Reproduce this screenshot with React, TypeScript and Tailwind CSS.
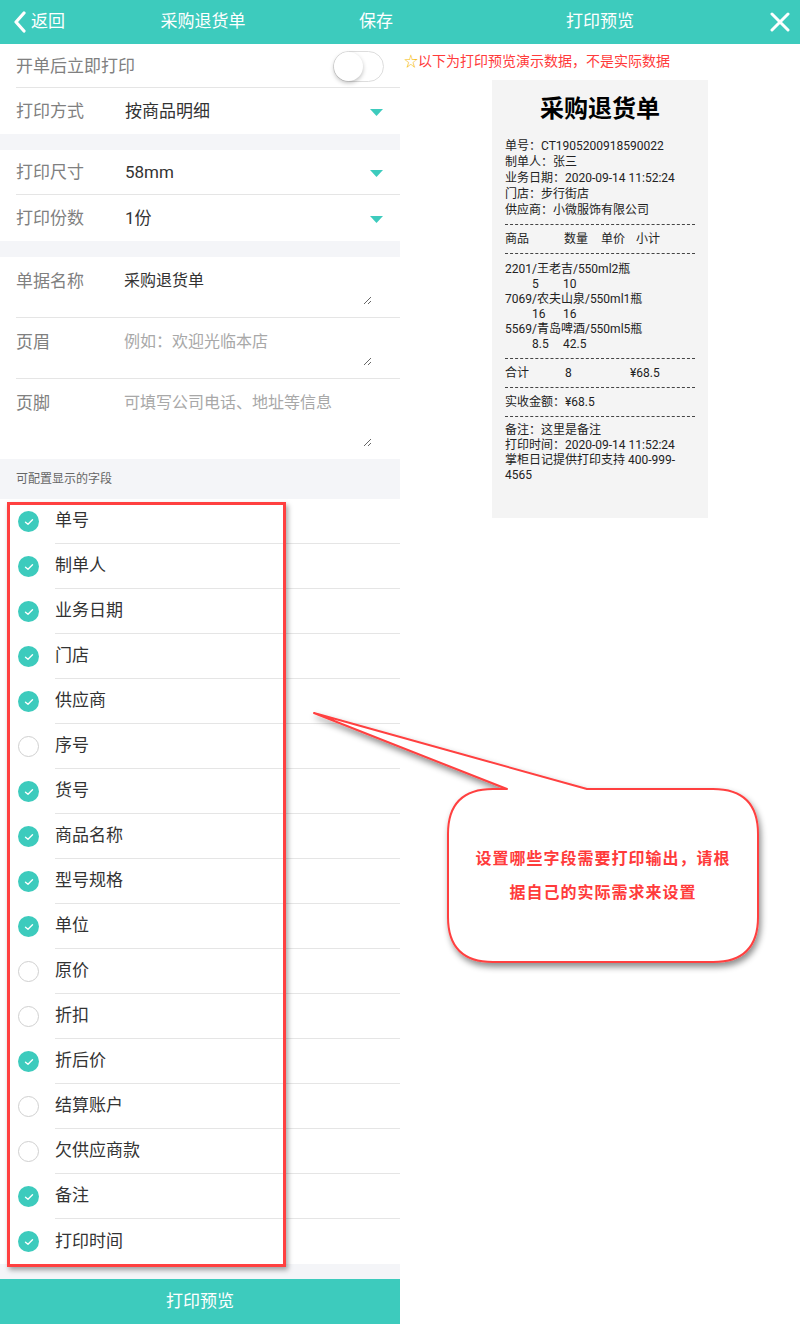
import React from "react";

const TEAL = "#3dcbbd";

const FIELDS = [
    { label: "单号", on: true },
    { label: "制单人", on: true },
    { label: "业务日期", on: true },
    { label: "门店", on: true },
    { label: "供应商", on: true },
    { label: "序号", on: false },
    { label: "货号", on: true },
    { label: "商品名称", on: true },
    { label: "型号规格", on: true },
    { label: "单位", on: true },
    { label: "原价", on: false },
    { label: "折扣", on: false },
    { label: "折后价", on: true },
    { label: "结算账户", on: false },
    { label: "欠供应商款", on: false },
    { label: "备注", on: true },
    { label: "打印时间", on: true },
];

const ITEMS = [
    { name: "2201/王老吉/550ml2瓶", qty: "5", price: "10" },
    { name: "7069/农夫山泉/550ml1瓶", qty: "16", price: "16" },
    { name: "5569/青岛啤酒/550ml5瓶", qty: "8.5", price: "42.5" },
];

function Caret() {
    return (
        <svg width="13" height="7" viewBox="0 0 13 7" className="shrink-0">
            <path d="M0 0 H13 L6.5 7 Z" fill={TEAL} />
        </svg>
    );
}

function SelectRow({ label, value, border, h }: { label: string; value: string; border?: boolean; h: string }) {
    return (
        <div className="pl-4 bg-white">
            <div className={"flex items-center pt-[2px] pr-[17px] " + h + (border ? " border-b border-[#e5e5e5]" : "")}>
                <span className="w-[109px] text-[17px] text-[#808080]">{label}</span>
                <span className="flex-1 text-[17px] text-[#333]">{value}</span>
                <Caret />
            </div>
        </div>
    );
}

function TextRow({ label, value, placeholder, h, border }: { label: string; value?: string; placeholder?: string; h: string; border?: boolean }) {
    return (
        <div className="pl-4 bg-white">
            <div className={"flex pt-[11px] " + h + (border ? " border-b border-[#e5e5e5]" : "")}>
                <span className="w-[109px] text-[17px] leading-[26px] text-[#808080]">{label}</span>
                <textarea
                    className="w-[248px] h-[calc(100%-12px)] text-[16px] leading-[26px] text-[#333] placeholder:text-[#a8a8a8] bg-transparent outline-none resize-y -ml-[1px]"
                    defaultValue={value}
                    placeholder={placeholder}
                />
            </div>
        </div>
    );
}

function Check({ on }: { on: boolean }) {
    if (!on) return <div className="w-[21px] h-[21px] rounded-full border border-[#d0d0d0] bg-white" />;
    return (
        <div className="w-[21px] h-[21px] rounded-full flex items-center justify-center" style={{ background: TEAL }}>
            <svg width="10" height="8" viewBox="0 0 10 8">
                <path d="M1.5 4.2 L4 6.3 L8.5 1.8" fill="none" stroke="white" strokeWidth="1.4" strokeLinecap="round" strokeLinejoin="round" />
            </svg>
        </div>
    );
}

function Dash() {
    return <div className="my-[6px] border-t border-dashed border-[#444]" />;
}

function Receipt() {
    return (
        <div className="mx-auto mt-[9px] w-[216px] h-[438px] bg-[#f4f4f4] px-[13px] pt-[14px] text-[12px] text-[#222]">
            <div className="text-center text-[24px] font-bold leading-[30px] text-black">采购退货单</div>
            <div className="mt-[14px] leading-[16px]">
                <div>单号：CT1905200918590022</div>
                <div>制单人：张三</div>
                <div>业务日期：2020-09-14 11:52:24</div>
                <div>门店：步行街店</div>
                <div>供应商：小微服饰有限公司</div>
            </div>
            <Dash />
            <div className="flex leading-[16px]">
                <span className="w-[59px]">商品</span>
                <span className="w-[37px]">数量</span>
                <span className="w-[35px]">单价</span>
                <span>小计</span>
            </div>
            <Dash />
            <div className="leading-[15px] mt-[8px]">
                {ITEMS.map((it) => (
                    <div key={it.name}>
                        <div>{it.name}</div>
                        <div className="flex">
                            <span className="w-[58px] pl-[27px] shrink-0">{it.qty}</span>
                            <span>{it.price}</span>
                        </div>
                    </div>
                ))}
            </div>
            <Dash />
            <div className="flex leading-[16px]">
                <span className="w-[60px]">合计</span>
                <span className="w-[65px]">8</span>
                <span>¥68.5</span>
            </div>
            <Dash />
            <div className="leading-[16px]">实收金额：¥68.5</div>
            <Dash />
            <div className="leading-[15px]">
                <div>备注：这里是备注</div>
                <div>打印时间：2020-09-14 11:52:24</div>
                <div>掌柜日记提供打印支持 400-999-4565</div>
            </div>
        </div>
    );
}

export default function App() {
    return (
        <div
            className="relative flex w-[800px] h-[1324px] overflow-hidden bg-white"
            style={{ fontFamily: 'Roboto, "Noto Sans CJK SC", sans-serif' }}
        >
            {/* Left: settings */}
            <div className="w-[400px] flex flex-col bg-[#f4f5f8]">
                <div className="h-[44px] flex items-center justify-between pl-[13px] pr-[7px] text-white text-[17px]" style={{ background: TEAL }}>
                    <div className="flex items-center w-[80px]">
                        <svg width="14" height="22" viewBox="0 0 14 22">
                            <path d="M11 2 L3 11 L11 20" fill="none" stroke="white" strokeWidth="3.2" strokeLinecap="round" strokeLinejoin="round" />
                        </svg>
                        <span className="ml-[4px]">返回</span>
                    </div>
                    <span>采购退货单</span>
                    <span className="w-[80px] text-right">保存</span>
                </div>

                <div className="pl-4 bg-white">
                    <div className="flex items-center justify-between h-[44px] pt-[2px] pr-[16px] border-b border-[#e5e5e5]">
                        <span className="text-[17px] text-[#808080]">开单后立即打印</span>
                        <div className="w-[51px] h-[31px] rounded-full border border-[#ddd] bg-white relative">
                            <div className="absolute left-0 top-0 w-[29px] h-[29px] rounded-full bg-white shadow-[0_2px_4px_rgba(0,0,0,0.25)]" />
                        </div>
                    </div>
                </div>
                <SelectRow label="打印方式" value="按商品明细" h="h-[46px]" />
                <div className="h-[16px]" />
                <SelectRow label="打印尺寸" value="58mm" h="h-[45px]" border />
                <SelectRow label="打印份数" value="1份" h="h-[46px]" />
                <div className="h-[16px]" />
                <TextRow label="单据名称" value="采购退货单" h="h-[61px]" border />
                <TextRow label="页眉" placeholder="例如：欢迎光临本店" h="h-[61px]" border />
                <TextRow label="页脚" placeholder="可填写公司电话、地址等信息" h="h-[80px]" />

                <div className="h-[40px] flex items-center pl-4 text-[12px] text-[#666]">可配置显示的字段</div>

                <div className="bg-white">
                    {FIELDS.map((f, i) => (
                        <div key={f.label} className="flex items-center h-[45px]">
                            <div className="w-[55px] pl-[18px]">
                                <Check on={f.on} />
                            </div>
                            <div className={"flex-1 h-full flex items-center text-[17px] text-[#333] " + (i < FIELDS.length - 1 ? "border-b border-[#e5e5e5]" : "")}>
                                {f.label}
                            </div>
                        </div>
                    ))}
                </div>
                <div className="flex-1" />
                <div className="h-[45px] flex items-center justify-center text-white text-[17px]" style={{ background: TEAL }}>
                    打印预览
                </div>
            </div>

            {/* Right: preview */}
            <div className="w-[400px] flex flex-col bg-white">
                <div className="h-[44px] relative flex items-center justify-center text-white text-[17px]" style={{ background: TEAL }}>
                    打印预览
                    <svg width="20" height="20" viewBox="0 0 20 20" className="absolute right-[10px] top-[12px]">
                        <path d="M2 2 L18 18 M18 2 L2 18" stroke="white" strokeWidth="3" strokeLinecap="round" />
                    </svg>
                </div>
                <div className="pl-[4px] pt-[7px] text-[14px] leading-[20px] text-[#ff3b3b]">
                    <span className="text-[#f5b800]">☆</span>以下为打印预览演示数据，不是实际数据
                </div>
                <Receipt />
            </div>

            {/* Annotation: red box around field list */}
            <div className="absolute left-[7px] top-[502px] w-[279px] h-[765px] border-[3px] border-[#ff4040] shadow-[2px_3px_5px_rgba(0,0,0,0.35)] pointer-events-none" />

            {/* Annotation: callout bubble */}
            <svg className="absolute left-0 top-0 pointer-events-none" width="800" height="1324">
                <defs>
                    <filter id="sh" x="-10%" y="-10%" width="130%" height="130%">
                        <feDropShadow dx="2" dy="4" stdDeviation="3" floodColor="#000" floodOpacity="0.45" />
                    </filter>
                </defs>
                <path
                    d="M314 713 L587 789 H713 Q758 789 758 834 V917 Q758 962 713 962 H493 Q448 962 448 917 V834 Q448 789 493 789 H507 Z"
                    fill="white"
                    stroke="#ff4040"
                    strokeWidth="2"
                    strokeLinejoin="round"
                    filter="url(#sh)"
                />
            </svg>
            <div className="absolute left-[448px] top-[789px] w-[310px] h-[173px] flex flex-col items-center justify-center text-[16px] tracking-[1px] font-bold leading-[34px] text-[#ff3b3b] pointer-events-none">
                <div>设置哪些字段需要打印输出，请根</div>
                <div>据自己的实际需求来设置</div>
            </div>
        </div>
    );
}
